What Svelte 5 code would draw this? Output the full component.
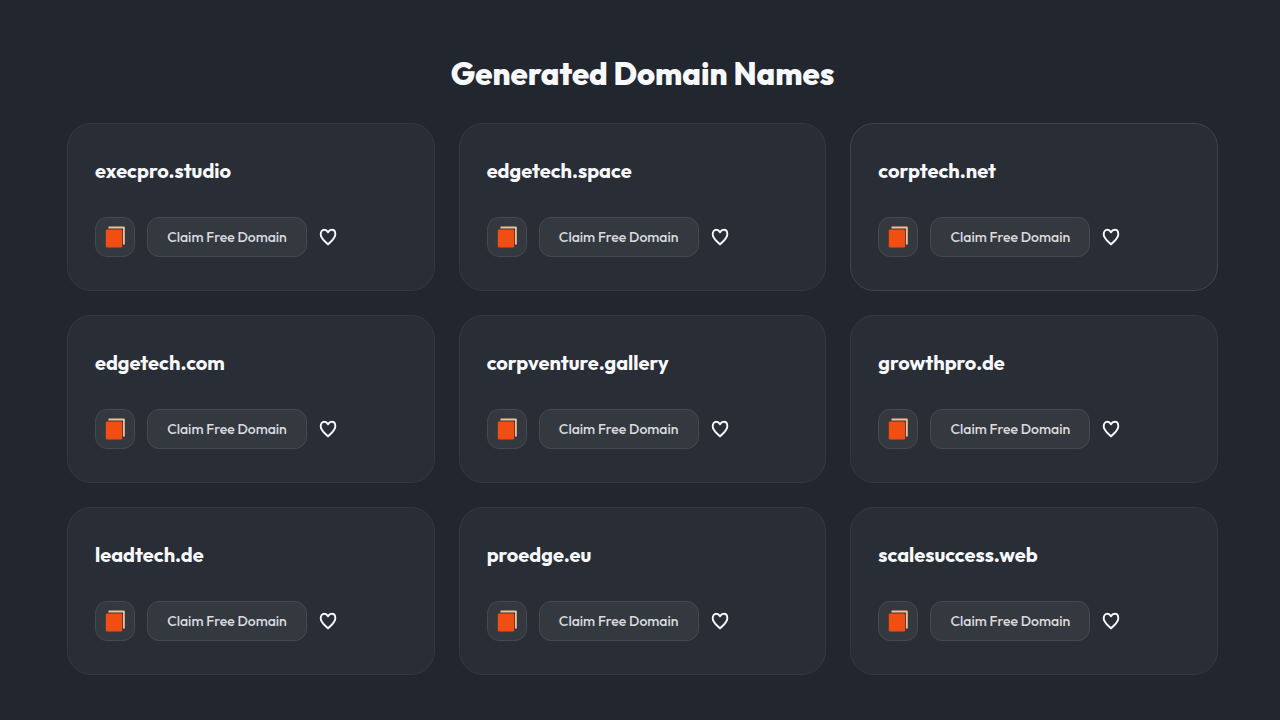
<script>
  let domains = $state([
    { name: 'execpro.studio', liked: false },
    { name: 'edgetech.space', liked: false },
    { name: 'corptech.net', liked: false },
    { name: 'edgetech.com', liked: false },
    { name: 'corpventure.gallery', liked: false },
    { name: 'growthpro.de', liked: false },
    { name: 'leadtech.de', liked: false },
    { name: 'proedge.eu', liked: false },
    { name: 'scalesuccess.web', liked: false }
  ]);

  let active = $state('corptech.net');

  function copy(name) {
    navigator.clipboard?.writeText(name);
  }
</script>

<main>
  <h1>Generated Domain Names</h1>

  <ul class="grid">
    {#each domains as domain (domain.name)}
      <li
        class="card"
        class:active={domain.name === active}
        onmouseenter={() => (active = domain.name)}
      >
        <h2>{domain.name}</h2>
        <div class="actions">
          <button class="copy" onclick={() => copy(domain.name)} aria-label="Copy {domain.name}">
            <svg width="20" height="22" viewBox="0 0 20 22" aria-hidden="true">
              <path d="M3.5 1.5H18.9V18.6" fill="none" stroke="#f0bf9c" stroke-width="1.8" stroke-linejoin="round" />
              <rect x="0.8" y="3.4" width="16.4" height="18.2" rx="1.4" fill="#f04e12" />
            </svg>
          </button>
          <button class="claim">Claim Free Domain</button>
          <button
            class="like"
            class:liked={domain.liked}
            onclick={() => (domain.liked = !domain.liked)}
            aria-pressed={domain.liked}
            aria-label="Save {domain.name}"
          >
            <svg width="18" height="18" viewBox="0 0 18 18" aria-hidden="true">
              <path
                d="M9 16.4C6.2 13.4 1.7 10.6 1.7 6.2C1.7 3.6 3.2 1.8 5.2 1.8C6.9 1.8 8.2 2.8 9 4.3C9.8 2.8 11.1 1.8 12.8 1.8C14.8 1.8 16.3 3.6 16.3 6.2C16.3 10.6 11.8 13.4 9 16.4Z"
                stroke="currentColor"
                stroke-width="1.9"
                stroke-linejoin="round"
              />
            </svg>
          </button>
        </div>
      </li>
    {/each}
  </ul>
</main>

<style>
  :global(body) {
    margin: 0;
    background: #22262f;
  }

  main {
    padding: 54px 62px 45px 67px;
    color: #f8f9fc;
    font-family: Outfit, Lato, sans-serif;
  }

  h1 {
    margin: 0 0 29px;
    font-size: 31px;
    line-height: 40px;
    font-weight: 800;
    text-align: center;
  }

  .grid {
    display: grid;
    grid-template-columns: repeat(3, 1fr);
    gap: 24px;
    margin: 0;
    padding: 0;
    list-style: none;
  }

  .card {
    padding: 33px 27px;
    border: 1px solid #343841;
    border-radius: 24px;
    background: #292d36;
  }

  .card.active {
    border-color: #40444c;
  }

  h2 {
    margin: 0 0 32px;
    font-size: 20px;
    line-height: 28px;
    font-weight: 700;
  }

  .actions {
    display: flex;
    align-items: center;
    gap: 12px;
  }

  button {
    display: flex;
    align-items: center;
    justify-content: center;
    padding: 0;
    border: 0;
    background: none;
    color: #f8f9fc;
    font-family: inherit;
    cursor: pointer;
  }

  .copy,
  .claim {
    height: 40px;
    border: 1px solid #464a50;
    border-radius: 12px;
    background: #34383f;
  }

  .copy {
    width: 40px;
  }

  .claim {
    min-width: 160px;
    padding: 0 16px;
    color: #d9dbdf;
    font-size: 14px;
    font-weight: 500;
  }

  .like path {
    fill: none;
  }

  .like.liked path {
    fill: currentColor;
  }
</style>
